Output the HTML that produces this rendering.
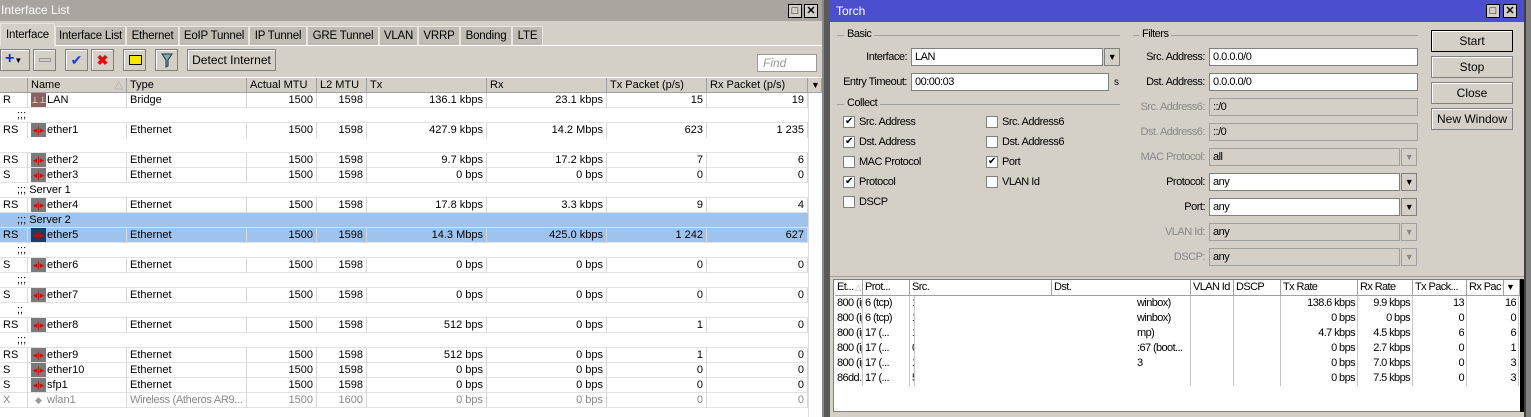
<!DOCTYPE html>
<html><head><meta charset="utf-8"><style>
*{box-sizing:border-box;margin:0;padding:0}
body{width:1531px;height:417px;overflow:hidden;background:#d4d0c8;font-family:"Liberation Sans",sans-serif;font-size:11px;color:#000;position:relative}
.a{position:absolute;white-space:nowrap}
.tb{position:absolute;width:14px;height:14px;border:1px solid #000;background:#d4d0c8;font-size:11px;line-height:12px;text-align:center;font-weight:bold}
.tab{position:absolute;top:26px;height:19px;background:#c0bcb4;border:1px solid #e8e6e0;border-bottom:none;font-size:11.5px;line-height:18px;text-align:center;white-space:nowrap;overflow:hidden;letter-spacing:-0.2px}
.btn{position:absolute;top:49px;height:22px;border:1px solid #808080;background:#d4d0c8;box-shadow:inset 1px 1px #fff}
.hd{position:absolute;top:78px;height:15px;border-right:1px solid #a0a0a0;background:#d4d0c8;border-bottom:1px solid #a0a0a0;padding-left:3px;line-height:14px;font-size:11px;white-space:nowrap;overflow:hidden}
.row{position:absolute;left:0;width:808px;height:15px;background:#fff;border-bottom:1px solid #e2e2e2}
.c{position:absolute;top:0;height:15px;line-height:14px;border-right:1px solid #d8d8d8;padding:0 3px;overflow:hidden;white-space:nowrap}
.r{text-align:right}
.ic{display:inline-block;width:15px;height:14px;background:#7a7a7a;vertical-align:top;color:#d00;font-size:9px;line-height:14px;text-align:center;margin-right:1px}
.hl{background:#9fc3ec}
.g{color:#888}
.T{letter-spacing:-0.5px}
.lbl{position:absolute;text-align:right;font-size:11px;line-height:18px;white-space:nowrap}
.in{position:absolute;height:18px;background:#fff;border:1px solid #808080;padding-left:3px;line-height:16px}
.dis{background:#d4d0c8;border-color:#a0a0a0}
.dd{position:absolute;width:16px;height:18px;border:1px solid #808080;background:#d4d0c8;font-size:9px;text-align:center;line-height:16px}
.cb{position:absolute;width:12px;height:12px;background:#fff;border:1px solid #808080;font-size:10px;line-height:10px;text-align:center}
.tbtn{position:absolute;left:1431px;width:82px;height:22px;border:1px solid #808080;background:#d4d0c8;text-align:center;line-height:20px;font-size:12px;box-shadow:inset 1px 1px #fff}
.th{position:absolute;top:280px;height:16px;border-right:1px solid #a0a0a0;border-bottom:1px solid #a0a0a0;padding-left:2px;line-height:15px;font-size:11px;white-space:nowrap;overflow:hidden;letter-spacing:-0.6px}
.tr{position:absolute;left:835px;width:684px;height:15px;letter-spacing:-0.6px}
.tc{position:absolute;top:0;height:15px;line-height:14px;border-right:1px solid #c8c8c8;padding:0 2px;overflow:hidden;white-space:nowrap}
</style></head><body>
<div class="a" style="left:0;top:0;width:822px;height:21px;background:#aaa49f;color:#fff;font-size:12px;line-height:21px;padding-left:1px">Interface List</div>
<div class="tb" style="left:788px;top:4px">□</div><div class="tb" style="left:804px;top:4px">✕</div>
<div class="a" style="left:0;top:45px;width:822px;height:1px;background:#fff"></div>
<div class="tab" style="left:0;width:55px;top:23px;height:23px;background:#d4d0c8;line-height:22px">Interface</div>
<div class="tab" style="left:55px;width:71px">Interface List</div>
<div class="tab" style="left:126px;width:53px">Ethernet</div>
<div class="tab" style="left:179px;width:70px">EoIP Tunnel</div>
<div class="tab" style="left:249px;width:58px">IP Tunnel</div>
<div class="tab" style="left:307px;width:72px">GRE Tunnel</div>
<div class="tab" style="left:379px;width:39px">VLAN</div>
<div class="tab" style="left:418px;width:42px">VRRP</div>
<div class="tab" style="left:460px;width:52px">Bonding</div>
<div class="tab" style="left:512px;width:31px">LTE</div>
<div class="btn" style="left:0;width:30px;color:#1030d0;font-weight:bold;font-size:16px;line-height:18px;padding-left:4px">+<span style="font-size:8px;color:#000">▼</span></div>
<div class="btn" style="left:33px;width:23px"><div class="a" style="left:5px;top:8px;width:12px;height:4px;border:1px solid #999"></div></div>
<div class="btn" style="left:65px;width:23px;color:#1a3bd6;font-size:14px;text-align:center;line-height:20px">✔</div>
<div class="btn" style="left:91px;width:23px;color:#e01010;font-size:14px;text-align:center;line-height:20px;font-weight:bold">✖</div>
<div class="btn" style="left:123px;width:23px"><div class="a" style="left:5px;top:5px;width:13px;height:10px;background:#f4e800;border:1px solid #000"></div></div>
<div class="btn" style="left:155px;width:23px"><svg class="a" style="left:5px;top:3px" width="12" height="15"><path d="M1 1H11L7 7V13L5 14V7Z" fill="#7ab" stroke="#234"/></svg></div>
<div class="btn" style="left:187px;width:89px;text-align:center;line-height:20px;font-size:12px">Detect Internet</div>
<div class="a" style="left:757px;top:54px;width:60px;height:18px;background:#fff;border:1px solid #999;color:#999;font-style:italic;font-size:12px;line-height:16px;padding-left:5px">Find</div>
<div class="a" style="left:0;top:77px;width:822px;height:340px;background:#fff"></div>
<div class="hd" style="left:0;width:28px"></div>
<div class="hd" style="left:28px;width:99px">Name<span style="position:absolute;right:3px;color:#aaa">△</span></div>
<div class="hd" style="left:127px;width:120px">Type</div>
<div class="hd" style="left:247px;width:70px">Actual MTU</div>
<div class="hd" style="left:317px;width:50px">L2 MTU</div>
<div class="hd" style="left:367px;width:120px">Tx</div>
<div class="hd" style="left:487px;width:120px">Rx</div>
<div class="hd" style="left:607px;width:100px">Tx Packet (p/s)</div>
<div class="hd" style="left:707px;width:101px">Rx Packet (p/s)</div>
<div class="hd" style="left:808px;width:14px;font-size:9px">▼</div>
<div class="a" style="left:808px;top:93px;width:14px;height:324px;background:#fff;border-left:1px solid #ddd"></div>

<div class="row" style="top:93px"><div class="c" style="left:0;width:28px">R</div><div class="c" style="left:28px;width:99px"><span class="ic" style="background:#8a6060;color:#fff">⊥⊥</span>LAN</div><div class="c" style="left:127px;width:120px">Bridge</div><div class="c r" style="left:247px;width:70px">1500</div><div class="c r" style="left:317px;width:50px">1598</div><div class="c r" style="left:367px;width:120px">136.1 kbps</div><div class="c r" style="left:487px;width:120px">23.1 kbps</div><div class="c r" style="left:607px;width:100px">15</div><div class="c r" style="left:707px;width:101px">19</div></div>
<div class="row" style="top:108px"><div class="c" style="left:14px;border:none">;;;</div></div>
<div class="row" style="top:123px;height:30px"><div class="c" style="left:0;width:28px">RS</div><div class="c" style="left:28px;width:99px"><span class="ic">◂|▸</span>ether1</div><div class="c" style="left:127px;width:120px">Ethernet</div><div class="c r" style="left:247px;width:70px">1500</div><div class="c r" style="left:317px;width:50px">1598</div><div class="c r" style="left:367px;width:120px">427.9 kbps</div><div class="c r" style="left:487px;width:120px">14.2 Mbps</div><div class="c r" style="left:607px;width:100px">623</div><div class="c r" style="left:707px;width:101px">1 235</div></div>
<div class="row" style="top:153px"><div class="c" style="left:0;width:28px">RS</div><div class="c" style="left:28px;width:99px"><span class="ic">◂|▸</span>ether2</div><div class="c" style="left:127px;width:120px">Ethernet</div><div class="c r" style="left:247px;width:70px">1500</div><div class="c r" style="left:317px;width:50px">1598</div><div class="c r" style="left:367px;width:120px">9.7 kbps</div><div class="c r" style="left:487px;width:120px">17.2 kbps</div><div class="c r" style="left:607px;width:100px">7</div><div class="c r" style="left:707px;width:101px">6</div></div>
<div class="row" style="top:168px"><div class="c" style="left:0;width:28px">S</div><div class="c" style="left:28px;width:99px"><span class="ic">◂|▸</span>ether3</div><div class="c" style="left:127px;width:120px">Ethernet</div><div class="c r" style="left:247px;width:70px">1500</div><div class="c r" style="left:317px;width:50px">1598</div><div class="c r" style="left:367px;width:120px">0 bps</div><div class="c r" style="left:487px;width:120px">0 bps</div><div class="c r" style="left:607px;width:100px">0</div><div class="c r" style="left:707px;width:101px">0</div></div>
<div class="row" style="top:183px"><div class="c" style="left:14px;border:none">;;; Server 1</div></div>
<div class="row" style="top:198px"><div class="c" style="left:0;width:28px">RS</div><div class="c" style="left:28px;width:99px"><span class="ic">◂|▸</span>ether4</div><div class="c" style="left:127px;width:120px">Ethernet</div><div class="c r" style="left:247px;width:70px">1500</div><div class="c r" style="left:317px;width:50px">1598</div><div class="c r" style="left:367px;width:120px">17.8 kbps</div><div class="c r" style="left:487px;width:120px">3.3 kbps</div><div class="c r" style="left:607px;width:100px">9</div><div class="c r" style="left:707px;width:101px">4</div></div>
<div class="row hl" style="top:213px"><div class="c" style="left:14px;border:none">;;; Server 2</div></div>
<div class="row hl" style="top:228px"><div class="c" style="left:0;width:28px">RS</div><div class="c" style="left:28px;width:99px"><span class="ic" style="background:#1e3c5e">◂|▸</span>ether5</div><div class="c" style="left:127px;width:120px">Ethernet</div><div class="c r" style="left:247px;width:70px">1500</div><div class="c r" style="left:317px;width:50px">1598</div><div class="c r" style="left:367px;width:120px">14.3 Mbps</div><div class="c r" style="left:487px;width:120px">425.0 kbps</div><div class="c r" style="left:607px;width:100px">1 242</div><div class="c r" style="left:707px;width:101px">627</div></div>
<div class="row" style="top:243px"><div class="c" style="left:14px;border:none">;;;</div></div>
<div class="row" style="top:258px"><div class="c" style="left:0;width:28px">S</div><div class="c" style="left:28px;width:99px"><span class="ic">◂|▸</span>ether6</div><div class="c" style="left:127px;width:120px">Ethernet</div><div class="c r" style="left:247px;width:70px">1500</div><div class="c r" style="left:317px;width:50px">1598</div><div class="c r" style="left:367px;width:120px">0 bps</div><div class="c r" style="left:487px;width:120px">0 bps</div><div class="c r" style="left:607px;width:100px">0</div><div class="c r" style="left:707px;width:101px">0</div></div>
<div class="row" style="top:273px"><div class="c" style="left:14px;border:none">;;;</div></div>
<div class="row" style="top:288px"><div class="c" style="left:0;width:28px">S</div><div class="c" style="left:28px;width:99px"><span class="ic">◂|▸</span>ether7</div><div class="c" style="left:127px;width:120px">Ethernet</div><div class="c r" style="left:247px;width:70px">1500</div><div class="c r" style="left:317px;width:50px">1598</div><div class="c r" style="left:367px;width:120px">0 bps</div><div class="c r" style="left:487px;width:120px">0 bps</div><div class="c r" style="left:607px;width:100px">0</div><div class="c r" style="left:707px;width:101px">0</div></div>
<div class="row" style="top:303px"><div class="c" style="left:14px;border:none">;;</div></div>
<div class="row" style="top:318px"><div class="c" style="left:0;width:28px">RS</div><div class="c" style="left:28px;width:99px"><span class="ic">◂|▸</span>ether8</div><div class="c" style="left:127px;width:120px">Ethernet</div><div class="c r" style="left:247px;width:70px">1500</div><div class="c r" style="left:317px;width:50px">1598</div><div class="c r" style="left:367px;width:120px">512 bps</div><div class="c r" style="left:487px;width:120px">0 bps</div><div class="c r" style="left:607px;width:100px">1</div><div class="c r" style="left:707px;width:101px">0</div></div>
<div class="row" style="top:333px"><div class="c" style="left:14px;border:none">;;;</div></div>
<div class="row" style="top:348px"><div class="c" style="left:0;width:28px">RS</div><div class="c" style="left:28px;width:99px"><span class="ic">◂|▸</span>ether9</div><div class="c" style="left:127px;width:120px">Ethernet</div><div class="c r" style="left:247px;width:70px">1500</div><div class="c r" style="left:317px;width:50px">1598</div><div class="c r" style="left:367px;width:120px">512 bps</div><div class="c r" style="left:487px;width:120px">0 bps</div><div class="c r" style="left:607px;width:100px">1</div><div class="c r" style="left:707px;width:101px">0</div></div>
<div class="row" style="top:363px"><div class="c" style="left:0;width:28px">S</div><div class="c" style="left:28px;width:99px"><span class="ic">◂|▸</span>ether10</div><div class="c" style="left:127px;width:120px">Ethernet</div><div class="c r" style="left:247px;width:70px">1500</div><div class="c r" style="left:317px;width:50px">1598</div><div class="c r" style="left:367px;width:120px">0 bps</div><div class="c r" style="left:487px;width:120px">0 bps</div><div class="c r" style="left:607px;width:100px">0</div><div class="c r" style="left:707px;width:101px">0</div></div>
<div class="row" style="top:378px"><div class="c" style="left:0;width:28px">S</div><div class="c" style="left:28px;width:99px"><span class="ic">◂|▸</span>sfp1</div><div class="c" style="left:127px;width:120px">Ethernet</div><div class="c r" style="left:247px;width:70px">1500</div><div class="c r" style="left:317px;width:50px">1598</div><div class="c r" style="left:367px;width:120px">0 bps</div><div class="c r" style="left:487px;width:120px">0 bps</div><div class="c r" style="left:607px;width:100px">0</div><div class="c r" style="left:707px;width:101px">0</div></div>
<div class="row g" style="top:393px"><div class="c" style="left:0;width:28px">X</div><div class="c" style="left:28px;width:99px"><span class="ic" style="background:none;color:#999">◆</span>wlan1</div><div class="c" style="left:127px;width:120px;letter-spacing:-0.3px">Wireless (Atheros AR9...</div><div class="c r" style="left:247px;width:70px">1500</div><div class="c r" style="left:317px;width:50px">1600</div><div class="c r" style="left:367px;width:120px">0 bps</div><div class="c r" style="left:487px;width:120px">0 bps</div><div class="c r" style="left:607px;width:100px">0</div><div class="c r" style="left:707px;width:101px">0</div></div>

<div class="a" style="left:822px;top:0;width:8px;height:417px;background:#5a5a5a;border-left:2px solid #888"></div>
<div class="a" style="left:1524px;top:0;width:7px;height:417px;background:#808080;border-left:2px solid #404040"></div>

<div class="a" style="left:830px;top:0;width:694px;height:22px;background:#4a4ecf;color:#fff;font-size:12px;line-height:22px;padding-left:6px">Torch</div>
<div class="tb" style="left:1486px;top:4px">□</div><div class="tb" style="left:1503px;top:4px">✕</div>

<div class="T">
<div class="a" style="left:837px;top:35px;width:283px;height:1px;background:#a0a0a0"></div>
<div class="a" style="left:844px;top:28px;background:#d4d0c8;padding:0 3px;font-size:11px">Basic</div>
<div class="lbl" style="left:835px;width:72px;top:48px">Interface:</div>
<div class="in" style="left:911px;top:48px;width:192px">LAN</div><div class="dd" style="left:1104px;top:48px">▼</div>
<div class="lbl" style="left:835px;width:72px;top:73px">Entry Timeout:</div>
<div class="in" style="left:911px;top:73px;width:198px">00:00:03</div><div class="a" style="left:1114px;top:77px;font-size:10px">s</div>
<div class="a" style="left:837px;top:104px;width:283px;height:1px;background:#a0a0a0"></div>
<div class="a" style="left:844px;top:97px;background:#d4d0c8;padding:0 3px">Collect</div>

<div class="cb" style="left:843px;top:116px">✔</div><div class="a" style="left:859px;top:116px">Src. Address</div>
<div class="cb" style="left:843px;top:136px">✔</div><div class="a" style="left:859px;top:136px">Dst. Address</div>
<div class="cb" style="left:843px;top:156px"></div><div class="a" style="left:859px;top:156px">MAC Protocol</div>
<div class="cb" style="left:843px;top:176px">✔</div><div class="a" style="left:859px;top:176px">Protocol</div>
<div class="cb" style="left:843px;top:196px"></div><div class="a" style="left:859px;top:196px">DSCP</div>
<div class="cb" style="left:986px;top:116px"></div><div class="a" style="left:1002px;top:116px">Src. Address6</div>
<div class="cb" style="left:986px;top:136px"></div><div class="a" style="left:1002px;top:136px">Dst. Address6</div>
<div class="cb" style="left:986px;top:156px">✔</div><div class="a" style="left:1002px;top:156px">Port</div>
<div class="cb" style="left:986px;top:176px"></div><div class="a" style="left:1002px;top:176px">VLAN Id</div>

<div class="a" style="left:1133px;top:35px;width:285px;height:1px;background:#a0a0a0"></div>
<div class="a" style="left:1139px;top:28px;background:#d4d0c8;padding:0 3px">Filters</div>
<div class="lbl" style="left:1120px;width:85px;top:48px">Src. Address:</div><div class="in" style="left:1209px;top:48px;width:209px">0.0.0.0/0</div>
<div class="lbl" style="left:1120px;width:85px;top:73px">Dst. Address:</div><div class="in" style="left:1209px;top:73px;width:209px">0.0.0.0/0</div>
<div class="lbl g" style="left:1120px;width:85px;top:98px">Src. Address6:</div><div class="in dis" style="left:1209px;top:98px;width:209px">::/0</div>
<div class="lbl g" style="left:1120px;width:85px;top:123px">Dst. Address6:</div><div class="in dis" style="left:1209px;top:123px;width:209px">::/0</div>
<div class="lbl g" style="left:1120px;width:85px;top:148px">MAC Protocol:</div><div class="in dis" style="left:1209px;top:148px;width:191px">all</div><div class="dd g" style="left:1401px;top:148px;border-color:#a0a0a0">▼</div>
<div class="lbl" style="left:1120px;width:85px;top:173px">Protocol:</div><div class="in" style="left:1209px;top:173px;width:191px">any</div><div class="dd" style="left:1401px;top:173px">▼</div>
<div class="lbl" style="left:1120px;width:85px;top:198px">Port:</div><div class="in" style="left:1209px;top:198px;width:191px">any</div><div class="dd" style="left:1401px;top:198px">▼</div>
<div class="lbl g" style="left:1120px;width:85px;top:223px">VLAN Id:</div><div class="in dis" style="left:1209px;top:223px;width:191px">any</div><div class="dd g" style="left:1401px;top:223px;border-color:#a0a0a0">▼</div>
<div class="lbl g" style="left:1120px;width:85px;top:248px">DSCP:</div><div class="in dis" style="left:1209px;top:248px;width:191px">any</div><div class="dd g" style="left:1401px;top:248px;border-color:#a0a0a0">▼</div>
</div>

<div class="tbtn" style="top:30px;border-color:#000">Start</div>
<div class="tbtn" style="top:56px">Stop</div>
<div class="tbtn" style="top:82px">Close</div>
<div class="tbtn" style="top:108px">New Window</div>

<div class="a" style="left:830px;top:276px;width:694px;height:1px;background:#a0a0a0"></div>
<div class="a" style="left:833px;top:279px;width:688px;height:133px;background:#fff;border:1px solid #808080"></div>
<div class="th" style="left:835px;width:28px">Et...<span style="color:#aaa;font-size:8px"> △</span></div>
<div class="th" style="left:863px;width:47px">Prot...</div>
<div class="th" style="left:910px;width:142px">Src.</div>
<div class="th" style="left:1052px;width:139px">Dst.</div>
<div class="th" style="left:1191px;width:43px">VLAN Id</div>
<div class="th" style="left:1234px;width:47px">DSCP</div>
<div class="th" style="left:1281px;width:77px">Tx Rate</div>
<div class="th" style="left:1358px;width:55px">Rx Rate</div>
<div class="th" style="left:1413px;width:54px">Tx Pack...</div>
<div class="th" style="left:1467px;width:37px">Rx Pac</div>
<div class="th" style="left:1504px;width:16px;font-size:9px">▼</div>

<div class="tr" style="top:296px"><div class="tc" style="left:0;width:28px">800 (ip)</div><div class="tc" style="left:28px;width:47px">6 (tcp)</div><div class="tc" style="left:75px;width:5px">1</div><div class="tc" style="left:300px;width:56px">winbox)</div><div class="tc" style="left:356px;width:43px"></div><div class="tc" style="left:399px;width:47px"></div><div class="tc r" style="left:446px;width:77px">138.6 kbps</div><div class="tc r" style="left:523px;width:55px">9.9 kbps</div><div class="tc r" style="left:578px;width:54px">13</div><div class="tc r" style="left:632px;width:52px">16</div></div>
<div class="tr" style="top:311px"><div class="tc" style="left:0;width:28px">800 (ip)</div><div class="tc" style="left:28px;width:47px">6 (tcp)</div><div class="tc" style="left:75px;width:5px">1</div><div class="tc" style="left:300px;width:56px">winbox)</div><div class="tc" style="left:356px;width:43px"></div><div class="tc" style="left:399px;width:47px"></div><div class="tc r" style="left:446px;width:77px">0 bps</div><div class="tc r" style="left:523px;width:55px">0 bps</div><div class="tc r" style="left:578px;width:54px">0</div><div class="tc r" style="left:632px;width:52px">0</div></div>
<div class="tr" style="top:326px"><div class="tc" style="left:0;width:28px">800 (ip)</div><div class="tc" style="left:28px;width:47px">17 (...</div><div class="tc" style="left:75px;width:5px">1</div><div class="tc" style="left:300px;width:56px">mp)</div><div class="tc" style="left:356px;width:43px"></div><div class="tc" style="left:399px;width:47px"></div><div class="tc r" style="left:446px;width:77px">4.7 kbps</div><div class="tc r" style="left:523px;width:55px">4.5 kbps</div><div class="tc r" style="left:578px;width:54px">6</div><div class="tc r" style="left:632px;width:52px">6</div></div>
<div class="tr" style="top:341px"><div class="tc" style="left:0;width:28px">800 (ip)</div><div class="tc" style="left:28px;width:47px">17 (...</div><div class="tc" style="left:75px;width:5px">0</div><div class="tc" style="left:300px;width:56px">:67 (boot...</div><div class="tc" style="left:356px;width:43px"></div><div class="tc" style="left:399px;width:47px"></div><div class="tc r" style="left:446px;width:77px">0 bps</div><div class="tc r" style="left:523px;width:55px">2.7 kbps</div><div class="tc r" style="left:578px;width:54px">0</div><div class="tc r" style="left:632px;width:52px">1</div></div>
<div class="tr" style="top:356px"><div class="tc" style="left:0;width:28px">800 (ip)</div><div class="tc" style="left:28px;width:47px">17 (...</div><div class="tc" style="left:75px;width:5px">1</div><div class="tc" style="left:300px;width:56px">3</div><div class="tc" style="left:356px;width:43px"></div><div class="tc" style="left:399px;width:47px"></div><div class="tc r" style="left:446px;width:77px">0 bps</div><div class="tc r" style="left:523px;width:55px">7.0 kbps</div><div class="tc r" style="left:578px;width:54px">0</div><div class="tc r" style="left:632px;width:52px">3</div></div>
<div class="tr" style="top:371px"><div class="tc" style="left:0;width:28px">86dd...</div><div class="tc" style="left:28px;width:47px">17 (...</div><div class="tc" style="left:75px;width:5px">5</div><div class="tc" style="left:300px;width:56px"></div><div class="tc" style="left:356px;width:43px"></div><div class="tc" style="left:399px;width:47px"></div><div class="tc r" style="left:446px;width:77px">0 bps</div><div class="tc r" style="left:523px;width:55px">7.5 kbps</div><div class="tc r" style="left:578px;width:54px">0</div><div class="tc r" style="left:632px;width:52px">3</div></div>
<div class="a" style="left:1520px;top:279px;width:4px;height:133px;background:#000"></div>
</body></html>
